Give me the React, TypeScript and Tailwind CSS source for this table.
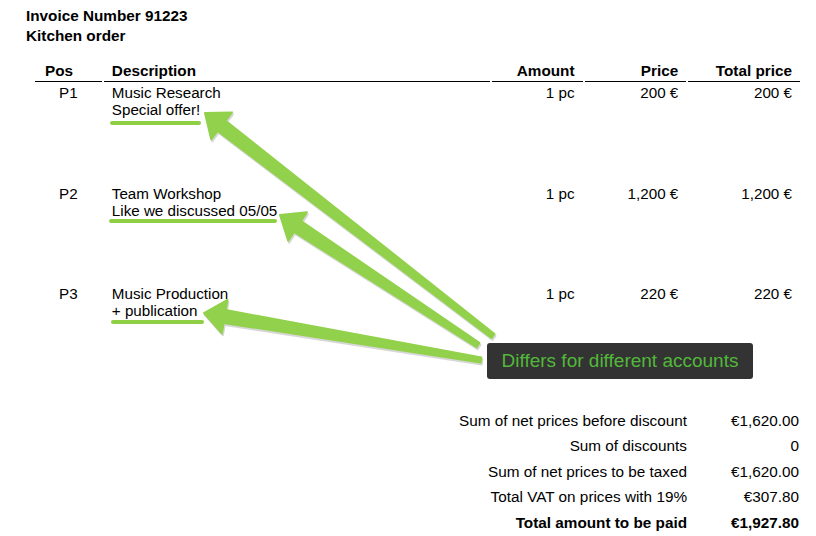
import React from 'react';

type Item = { pos: string; title: string; note: string; amount: string; price: string; total: string };

const items: Item[] = [
  { pos: 'P1', title: 'Music Research', note: 'Special offer!', amount: '1 pc', price: '200 €', total: '200 €' },
  { pos: 'P2', title: 'Team Workshop', note: 'Like we discussed 05/05', amount: '1 pc', price: '1,200 €', total: '1,200 €' },
  { pos: 'P3', title: 'Music Production', note: '+ publication', amount: '1 pc', price: '220 €', total: '220 €' },
];

const totals = [
  { label: 'Sum of net prices before discount', value: '€1,620.00' },
  { label: 'Sum of discounts', value: '0' },
  { label: 'Sum of net prices to be taxed', value: '€1,620.00' },
  { label: 'Total VAT on prices with 19%', value: '€307.80' },
  { label: 'Total amount to be paid', value: '€1,927.80', bold: true },
];

/**
 * Tapered annotation arrow: thin tail, wide shaft near the head, triangular tip
 */
function arrowPoints(tail: [number, number], tip: [number, number], tailW: number, shaftW: number, headL: number, headW: number) {
  const dx = tip[0] - tail[0];
  const dy = tip[1] - tail[1];
  const len = Math.hypot(dx, dy);
  const ux = dx / len;
  const uy = dy / len;
  const nx = -uy;
  const ny = ux;
  const bx = tip[0] - ux * headL;
  const by = tip[1] - uy * headL;
  const pts: [number, number][] = [
    [tail[0] + (nx * tailW) / 2, tail[1] + (ny * tailW) / 2],
    [bx + (nx * shaftW) / 2, by + (ny * shaftW) / 2],
    [bx + (nx * headW) / 2, by + (ny * headW) / 2],
    tip,
    [bx - (nx * headW) / 2, by - (ny * headW) / 2],
    [bx - (nx * shaftW) / 2, by - (ny * shaftW) / 2],
    [tail[0] - (nx * tailW) / 2, tail[1] - (ny * tailW) / 2],
  ];
  return pts.map((p) => `${p[0].toFixed(1)},${p[1].toFixed(1)}`).join(' ');
}

const arrows: { tail: [number, number]; tip: [number, number] }[] = [
  { tail: [493, 336], tip: [205, 113] },
  { tail: [478, 345], tip: [280, 215] },
  { tail: [481, 360], tip: [204, 313] },
];

function Annotations() {
  return (
    <svg className="absolute inset-0 pointer-events-none" width="816" height="536" viewBox="0 0 816 536">
      {/* underlines */}
      <g stroke="#8fcf45" strokeWidth="4" strokeLinecap="round">
        <line x1="112" y1="123" x2="199" y2="123" />
        <line x1="111" y1="221" x2="275" y2="221" />
        <line x1="113" y1="322" x2="202" y2="322" />
      </g>
      {/* arrow shadows */}
      {arrows.map((a, i) => (
        <polygon
          key={`s${i}`}
          points={arrowPoints([a.tail[0] + 1, a.tail[1] + 2], [a.tip[0] + 1, a.tip[1] + 2], 5, 13, 21, 34)}
          fill="#bdbdbd"
          strokeLinejoin="round"
          stroke="#bdbdbd"
          strokeWidth="2"
          opacity="0.6"
        />
      ))}
      {arrows.map((a, i) => (
        <polygon
          key={i}
          points={arrowPoints(a.tail, a.tip, 5, 13, 21, 34)}
          fill="#92d14b"
          stroke="#92d14b"
          strokeWidth="2"
          strokeLinejoin="round"
        />
      ))}
    </svg>
  );
}

export default function App() {
  return (
    <div
      className="relative w-[816px] h-[536px] overflow-hidden bg-white text-black"
      style={{ fontFamily: '"Liberation Sans", Arial, sans-serif' }}
    >
      <div className="pt-[6px] pl-[26px] text-[15.3px] font-bold leading-[20px]">
        <div>Invoice Number 91223</div>
        <div>Kitchen order</div>
      </div>

      {/* Items table */}
      <div className="ml-[35px] mt-[14px] w-[765px]">
        <div className="flex gap-[2px] text-[15.3px] font-bold leading-[21px]">
          <div className="w-[67px] pl-[10px] border-b border-black">Pos</div>
          <div className="w-[387px] pl-[8px] border-b border-black">Description</div>
          <div className="w-[91px] pr-[8px] text-right border-b border-black">Amount</div>
          <div className="w-[102px] pr-[8px] text-right border-b border-black">Price</div>
          <div className="w-[112px] pr-[8px] text-right border-b border-black">Total price</div>
        </div>
        {items.map((it) => (
          <div key={it.pos} className="flex gap-[2px] h-[100.5px] text-[15.2px] leading-[17px] pt-[2px]">
            <div className="w-[67px] text-center">{it.pos}</div>
            <div className="w-[387px] pl-[8px]">
              <div>{it.title}</div>
              <div>{it.note}</div>
            </div>
            <div className="w-[91px] pr-[8px] text-right">{it.amount}</div>
            <div className="w-[102px] pr-[8px] text-right">{it.price}</div>
            <div className="w-[112px] pr-[8px] text-right">{it.total}</div>
          </div>
        ))}
      </div>

      {/* Totals */}
      <div className="mt-[24px] ml-auto mr-[16px] w-fit grid grid-cols-[auto_104px] text-[15.3px] leading-[25.6px]">
        {totals.map((t) => (
          <React.Fragment key={t.label}>
            <div className={`text-right pr-[9px] ${t.bold ? 'font-bold' : ''}`}>{t.label}</div>
            <div className={`text-right pr-[1px] ${t.bold ? 'font-bold' : ''}`}>{t.value}</div>
          </React.Fragment>
        ))}
      </div>

      <Annotations />

      {/* Tooltip */}
      <div
        className="absolute left-[487px] top-[343px] w-[266px] h-[36px] rounded-[3px] bg-[#333333] flex items-center justify-center text-[19px] text-[#52b83a]"
        style={{ fontFamily: '"Liberation Sans", Arial, sans-serif' }}
      >
        Differs for different accounts
      </div>
    </div>
  );
}
